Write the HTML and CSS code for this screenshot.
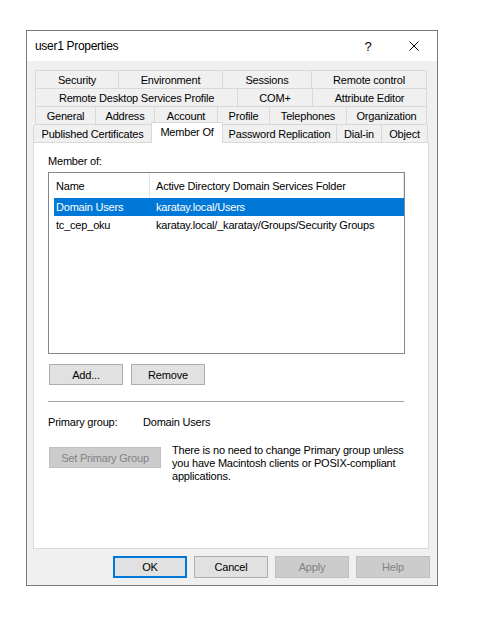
FILE: index.html
```html
<!DOCTYPE html>
<html>
<head>
<meta charset="utf-8">
<title>user1 Properties</title>
<link rel="stylesheet" href="styles.css">
</head>
<body>
<div class="window">
  <div class="titlebar">
    <span class="title">user1 Properties</span>
    <span class="tb-btn help">?</span>
    <span class="tb-btn close"><svg width="10" height="10" viewBox="0 0 10 10"><path d="M0.5 0.5L9.5 9.5M9.5 0.5L0.5 9.5" stroke="#000" stroke-width="1" fill="none"/></svg></span>
  </div>
  <div class="body">
    <div class="tabs">
      <div class="tab-row r1 back">
        <div class="tab first w-security">Security</div>
        <div class="tab w-environment">Environment</div>
        <div class="tab w-sessions">Sessions</div>
        <div class="tab w-remote">Remote control</div>
      </div>
      <div class="tab-row r2 back">
        <div class="tab first w-rds">Remote Desktop Services Profile</div>
        <div class="tab w-com">COM+</div>
        <div class="tab w-attr">Attribute Editor</div>
      </div>
      <div class="tab-row r3 back">
        <div class="tab first w-general">General</div>
        <div class="tab w-address">Address</div>
        <div class="tab w-account">Account</div>
        <div class="tab w-profile">Profile</div>
        <div class="tab w-phones">Telephones</div>
        <div class="tab w-org">Organization</div>
      </div>
      <div class="tab-row r4">
        <div class="tab first noright w-pub">Published Certificates</div>
        <div class="tab selected w-member">Member Of</div>
        <div class="tab w-pw">Password Replication</div>
        <div class="tab w-dial">Dial-in</div>
        <div class="tab w-object">Object</div>
      </div>
    </div>
    <div class="panel">
      <div class="label">Member of:</div>
      <div class="listbox">
        <div class="list-header">
          <div class="hcol hcol1">Name</div>
          <div class="hcol hcol2">Active Directory Domain Services Folder</div>
        </div>
        <div class="list-row sel">
          <div class="col1">Domain Users</div>
          <div class="col2">karatay.local/Users</div>
        </div>
        <div class="list-row">
          <div class="col1">tc_cep_oku</div>
          <div class="col2">karatay.local/_karatay/Groups/Security Groups</div>
        </div>
      </div>
      <div class="btn-row">
        <div class="btn">Add...</div>
        <div class="btn">Remove</div>
      </div>
      <div class="separator"></div>
      <div class="primary-row">
        <span class="pg-label">Primary group:</span>
        <span class="pg-value">Domain Users</span>
      </div>
      <div class="set-row">
        <div class="btn disabled wide">Set Primary Group</div>
        <div class="note">There is no need to change Primary group unless<br>you have Macintosh clients or POSIX-compliant<br>applications.</div>
      </div>
    </div>
    <div class="footer">
      <div class="btn fbtn default">OK</div>
      <div class="btn fbtn">Cancel</div>
      <div class="btn fbtn disabled">Apply</div>
      <div class="btn fbtn disabled">Help</div>
    </div>
  </div>
</div>
</body>
</html>
```
FILE: styles.css
```css
* { box-sizing: border-box; }
body {
  margin: 0;
  background: #ffffff;
  font-family: "Liberation Sans", Arial, sans-serif;
  font-size: 11px;
  letter-spacing: -0.2px;
  color: #000;
}
.window {
  margin: 30px 0 0 26px;
  width: 412px;
  height: 556px;
  border: 1px solid #7a7a7a;
  background: #f0f0f0;
  display: flex;
  flex-direction: column;
}
.titlebar {
  height: 30px;
  background: #ffffff;
  display: flex;
  align-items: center;
  flex: none;
}
.title {
  flex: 1;
  padding-left: 8px;
  font-size: 12px;
  letter-spacing: -0.3px;
}
.tb-btn {
  width: 46px;
  height: 30px;
  display: flex;
  align-items: center;
  justify-content: center;
}
.help { font-size: 13px; letter-spacing: 0; }
.close svg { display: block; }
.body {
  flex: 1;
  display: flex;
  flex-direction: column;
  padding: 9px 0 0 6px;
}
.tabs { display: flex; flex-direction: column; }
.tab-row { display: flex; }
.tab-row.back { margin-left: 2px; }
.tab {
  display: flex;
  align-items: center;
  justify-content: center;
  white-space: nowrap;
  border-right: 1px solid #d9d9d9;
  background: #f0f0f0;
}
.back .tab { border-bottom: 1px solid #d9d9d9; }
.tab.first { border-left: 1px solid #d9d9d9; }
.tab.noright { border-right: none; }
.r1 { height: 19px; }
.r1 .tab { border-top: 1px solid #d9d9d9; }
.r2, .r3 { height: 18px; }
.r4 { height: 17px; align-items: flex-end; }
.r4 .tab { height: 17px; }
.r4 .tab.selected {
  height: 21px;
  margin-bottom: -1px;
  background: #ffffff;
  border-left: 1px solid #d9d9d9;
  border-top: 1px solid #d9d9d9;
  position: relative;
  z-index: 1;
  padding-bottom: 2px;
}
.w-security { width: 84px; }
.w-environment { width: 104px; }
.w-sessions { width: 89px; }
.w-remote { width: 115px; }
.w-rds { width: 203px; }
.w-com { width: 75px; }
.w-attr { width: 114px; }
.w-general { width: 61px; }
.w-address { width: 59px; }
.w-account { width: 63px; }
.w-profile { width: 52px; }
.w-phones { width: 77px; }
.w-org { width: 80px; }
.w-pub { width: 118px; }
.w-member { width: 72px; }
.w-pw { width: 114px; }
.w-dial { width: 45px; }
.w-object { width: 46px; }

.panel {
  width: 396px;
  height: 407px;
  border: 1px solid #d9d9d9;
  background: #ffffff;
  display: flex;
  flex-direction: column;
  padding: 12px 0 0 14px;
  flex: none;
}
.label { line-height: 13px; }
.listbox {
  margin-top: 4px;
  width: 357px;
  height: 182px;
  border: 1px solid #828790;
  background: #fff;
}
.list-header { display: flex; height: 25px; }
.hcol { display: flex; align-items: center; }
.hcol1 { width: 100px; padding-left: 7px; }
.hcol2 {
  flex: 1;
  padding-left: 6px;
  border-left: 1px solid #e5e5e5;
  border-right: 1px solid #e5e5e5;
}
.list-row {
  display: flex;
  align-items: center;
  height: 18px;
  margin-left: 5px;
  white-space: nowrap;
}
.list-row.sel { background: #0078d7; color: #ffffff; }
.col1 { width: 96px; padding-left: 2px; }
.col2 { flex: 1; padding-left: 6px; }

.btn {
  display: flex;
  align-items: center;
  justify-content: center;
  width: 74px;
  height: 21px;
  background: #e1e1e1;
  border: 1px solid #adadad;
  white-space: nowrap;
}
.btn.disabled {
  background: #cccccc;
  border-color: #bfbfbf;
  color: #838383;
}
.btn.wide { width: 112px; }
.btn-row {
  display: flex;
  gap: 8px;
  margin-top: 10px;
  margin-left: 1px;
}
.separator {
  margin-top: 16px;
  width: 356px;
  height: 1px;
  background: #a0a0a0;
}
.primary-row {
  display: flex;
  margin-top: 14px;
  line-height: 13px;
}
.pg-label { width: 95px; }
.set-row {
  display: flex;
  align-items: flex-start;
  margin-top: 18px;
  margin-left: 1px;
}
.note {
  margin-left: 11px;
  margin-top: -3px;
  line-height: 13px;
}
.footer {
  display: flex;
  justify-content: flex-end;
  gap: 7px;
  margin-top: 7px;
  padding-right: 7px;
}
.fbtn { height: 22px; }
.fbtn.default { border: 2px solid #0078d7; }
```
